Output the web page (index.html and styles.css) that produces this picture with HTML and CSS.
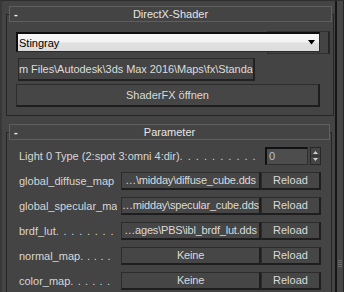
FILE: index.html
```
<!DOCTYPE html>
<html>
<head>
<meta charset="utf-8">
<link rel="stylesheet" href="styles.css">
</head>
<body>
<div class="app">
  <div class="main">
    <section class="rollout r1">
      <div class="rhead"><span class="minus">-</span><span class="title">DirectX-Shader</span><span></span></div>
      <div class="ghost"></div>
      <div class="combo"><span>Stingray</span><svg width="7" height="5" viewBox="0 0 7 5"><polygon points="0,0 7,0 3.5,4.5" fill="#000"/></svg></div>
      <div class="path">m Files\Autodesk\3ds Max 2016\Maps\fx\Standar</div>
      <div class="btn wide">ShaderFX öffnen</div>
    </section>
    <section class="rollout r2">
      <div class="rhead"><span class="minus">-</span><span class="title">Parameter</span><span></span></div>
      <div class="grid">
        <div class="label span2">Light 0 Type (2:spot 3:omni 4:dir)<span class="dots dl">. . . . . . . . . .</span></div>
        <div class="spin">
          <div class="field">0</div>
          <div class="arrows"><svg width="9" height="16" viewBox="0 0 9 16"><polygon points="4.5,3 7,6 2,6" fill="#cfcfcf"/><line x1="0" y1="8" x2="9" y2="8" stroke="#2a2a2a"/><polygon points="2,10 7,10 4.5,13" fill="#cfcfcf"/></svg></div>
        </div>

        <div class="label">global_diffuse_map</div>
        <div class="btn file">…\midday\diffuse_cube.dds</div>
        <div class="btn">Reload</div>

        <div class="label">global_specular_ma</div>
        <div class="btn file">…midday\specular_cube.dds</div>
        <div class="btn">Reload</div>

        <div class="label">brdf_lut<span class="dots db">. . . . . . . .</span></div>
        <div class="btn file">…ages\PBS\ibl_brdf_lut.dds</div>
        <div class="btn">Reload</div>

        <div class="label">normal_map<span class="dots dn">. . . . .</span></div>
        <div class="btn file">Keine</div>
        <div class="btn">Reload</div>

        <div class="label">color_map<span class="dots dc">. . . . . .</span></div>
        <div class="btn file">Keine</div>
        <div class="btn">Reload</div>
      </div>
    </section>
  </div>
  <div class="scroll"><div class="grip"><i></i><i></i><i></i><i></i></div></div>
</div>
</body>
</html>
```
FILE: styles.css
```
html, body {
  margin: 0;
  padding: 0;
  width: 344px;
  height: 292px;
  overflow: hidden;
  background: #444444;
}
body {
  font: 11px "Liberation Sans", Arial, sans-serif;
  color: #d6d6d6;
}
.app {
  display: flex;
  height: 292px;
  box-sizing: border-box;
  border-top: 1px solid #2e2e2e;
  border-left: 2px solid #383838;
}
.main {
  flex: 1;
  padding: 13px 0 0 4px;
  min-width: 0;
  display: flex;
  flex-direction: column;
  overflow: hidden;
}
.rollout {
  position: relative;
  border: 1px solid #262626;
  display: flex;
  flex-direction: column;
  align-items: flex-start;
}
.r1 {
  margin-right: 1px;
  padding-bottom: 8px;
}
.r2 {
  margin-top: 16px;
  margin-right: 3px;
  border-bottom: none;
  flex: 1;
}
.rhead {
  align-self: stretch;
  margin: -9px 1px 0 2px;
  height: 16px;
  box-sizing: border-box;
  border: 1px solid #5f5f5f;
  background: #444444;
  display: grid;
  grid-template-columns: 1fr auto 1fr;
  align-items: center;
  color: #e6e6e6;
  line-height: 14px;
}
.minus {
  padding-left: 4px;
  font-weight: bold;
  color: #f0f0f0;
}
.ghost {
  position: absolute;
  left: 260px;
  top: 16px;
  width: 60px;
  height: 21px;
  border: 1px solid #303030;
  border-right: 2px solid #262626;
}
.combo {
  position: relative;
  margin: 10px 0 0 9px;
  width: 304px;
  height: 20px;
  box-sizing: border-box;
  border-top: 2px solid #0e0e0e;
  border-left: 2px solid #0e0e0e;
  border-right: 1px solid #2a2a2a;
  border-bottom: 1px solid #2a2a2a;
  background: linear-gradient(#f7f7f7 0%, #f2f2f2 45%, #e0e0e0 55%, #dcdcdc 100%);
  color: #000;
  display: flex;
  align-items: center;
  justify-content: space-between;
  padding: 0 4px 0 1px;
}
.path {
  margin: 6px 0 0 11px;
  width: 237px;
  height: 23px;
  box-sizing: border-box;
  border: 1px solid #2a2a2a;
  border-bottom: 2px solid #222;
  border-right: 2px solid #222;
  line-height: 20px;
  white-space: nowrap;
  overflow: hidden;
  color: #dcdcdc;
  letter-spacing: -0.05px;
}
.btn {
  box-sizing: border-box;
  height: 18px;
  border-top: 1px solid #2c2c2c;
  border-left: 1px solid #2c2c2c;
  border-right: 2px solid #1e1e1e;
  border-bottom: 2px solid #1e1e1e;
  background: #464646;
  color: #dadada;
  text-align: center;
  white-space: nowrap;
  overflow: hidden;
  line-height: 15px;
}
.btn.file {
  letter-spacing: -0.2px;
}
.btn.wide {
  margin: 3px 0 0 9px;
  width: 304px;
  height: 23px;
  line-height: 20px;
}
.grid {
  margin: 7px 0 0 12px;
  display: grid;
  grid-template-columns: 98px 144px 60px;
  grid-auto-rows: 18px;
  row-gap: 7px;
}
.grid > .btn:nth-child(3n+1) {
  margin-left: 4px;
}
.label {
  white-space: nowrap;
  overflow: hidden;
  line-height: 18px;
}
.span2 {
  grid-column: 1 / 3;
}
.dl { letter-spacing: 1px; }
.db { letter-spacing: 0.85px; }
.dn { letter-spacing: 0.35px; }
.dc { letter-spacing: 0.6px; }
.spin {
  display: flex;
  gap: 2px;
  margin-left: 4px;
  margin-bottom: -2px;
}
.field {
  width: 47px;
  height: 18px;
  box-sizing: border-box;
  border-top: 2px solid #111;
  border-left: 2px solid #111;
  border-right: 1px solid #2e2e2e;
  border-bottom: 1px solid #2e2e2e;
  background: #4d4d4d;
  color: #b9c3d1;
  padding-left: 2px;
  line-height: 15px;
}
.arrows {
  width: 11px;
  height: 18px;
  box-sizing: border-box;
  border: 1px solid #262626;
  background: #464646;
}
.arrows svg { display: block; }
.scroll {
  width: 9px;
  box-sizing: border-box;
  border-left: 2px solid #161616;
  border-right: 1px solid #262626;
  background: #474747;
  padding-top: 259px;
}
.grip {
  display: flex;
  flex-direction: column;
  gap: 1px;
  padding-left: 1px;
}
.grip i {
  display: block;
  width: 4px;
  height: 1px;
  background: #6a6a6a;
}
```
